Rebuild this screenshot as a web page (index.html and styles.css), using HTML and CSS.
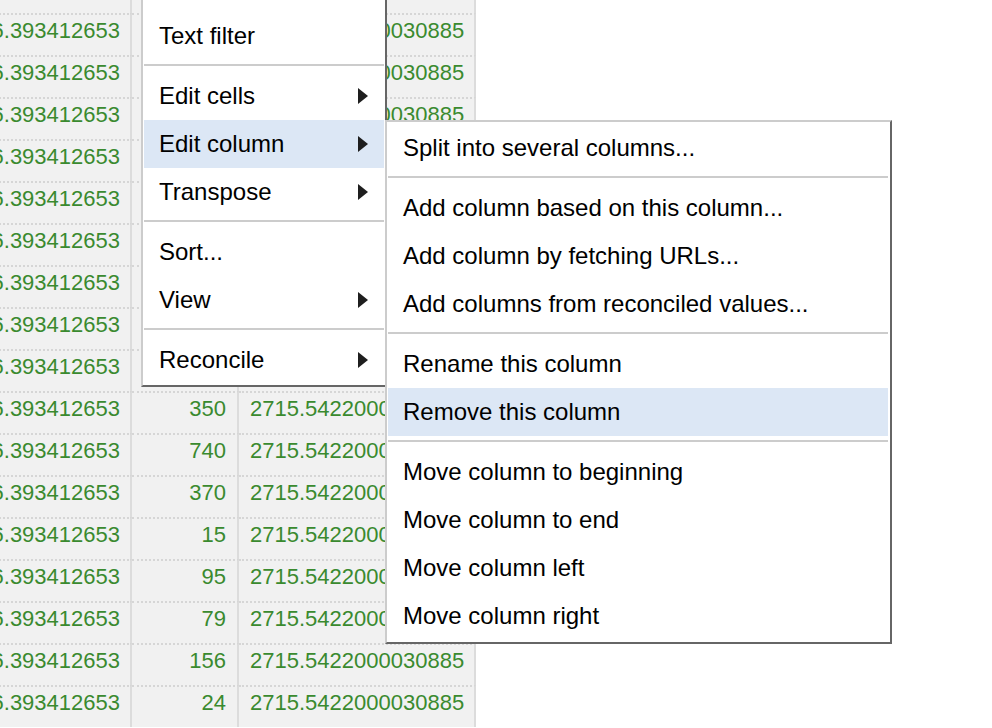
FILE: index.html
```html
<!DOCTYPE html>
<html>
<head>
<meta charset="utf-8">
<link rel="stylesheet" href="styles.css">
</head>
<body>
<div class="grid">
  <div class="row"><div class="c c1">36.393412653</div><div class="c c2">120</div><div class="c c3">2715.5422000030885</div></div>
  <div class="row"><div class="c c1">36.393412653</div><div class="c c2">210</div><div class="c c3">2715.5422000030885</div></div>
  <div class="row"><div class="c c1">36.393412653</div><div class="c c2">45</div><div class="c c3">2715.5422000030885</div></div>
  <div class="row"><div class="c c1">36.393412653</div><div class="c c2">60</div><div class="c c3">2715.5422000030885</div></div>
  <div class="row"><div class="c c1">36.393412653</div><div class="c c2">88</div><div class="c c3">2715.5422000030885</div></div>
  <div class="row"><div class="c c1">36.393412653</div><div class="c c2">430</div><div class="c c3">2715.5422000030885</div></div>
  <div class="row"><div class="c c1">36.393412653</div><div class="c c2">12</div><div class="c c3">2715.5422000030885</div></div>
  <div class="row"><div class="c c1">36.393412653</div><div class="c c2">67</div><div class="c c3">2715.5422000030885</div></div>
  <div class="row"><div class="c c1">36.393412653</div><div class="c c2">230</div><div class="c c3">2715.5422000030885</div></div>
  <div class="row"><div class="c c1">36.393412653</div><div class="c c2">51</div><div class="c c3">2715.5422000030885</div></div>
  <div class="row"><div class="c c1">36.393412653</div><div class="c c2">350</div><div class="c c3">2715.5422000030885</div></div>
  <div class="row"><div class="c c1">36.393412653</div><div class="c c2">740</div><div class="c c3">2715.5422000030885</div></div>
  <div class="row"><div class="c c1">36.393412653</div><div class="c c2">370</div><div class="c c3">2715.5422000030885</div></div>
  <div class="row"><div class="c c1">36.393412653</div><div class="c c2">15</div><div class="c c3">2715.5422000030885</div></div>
  <div class="row"><div class="c c1">36.393412653</div><div class="c c2">95</div><div class="c c3">2715.5422000030885</div></div>
  <div class="row"><div class="c c1">36.393412653</div><div class="c c2">79</div><div class="c c3">2715.5422000030885</div></div>
  <div class="row"><div class="c c1">36.393412653</div><div class="c c2">156</div><div class="c c3">2715.5422000030885</div></div>
  <div class="row"><div class="c c1">36.393412653</div><div class="c c2">24</div><div class="c c3">2715.5422000030885</div></div>
</div>

<div class="menu main-menu">
  <div class="item">Facet<span class="arrow"></span></div>
  <div class="item">Text filter</div>
  <div class="sep"></div>
  <div class="item">Edit cells<span class="arrow"></span></div>
  <div class="item active">Edit column<span class="arrow"></span></div>
  <div class="item">Transpose<span class="arrow"></span></div>
  <div class="sep"></div>
  <div class="item">Sort...</div>
  <div class="item">View<span class="arrow"></span></div>
  <div class="sep"></div>
  <div class="item">Reconcile<span class="arrow"></span></div>
</div>

<div class="menu sub-menu">
  <div class="item">Split into several columns...</div>
  <div class="sep"></div>
  <div class="item">Add column based on this column...</div>
  <div class="item">Add column by fetching URLs...</div>
  <div class="item">Add columns from reconciled values...</div>
  <div class="sep"></div>
  <div class="item">Rename this column</div>
  <div class="item active">Remove this column</div>
  <div class="sep"></div>
  <div class="item">Move column to beginning</div>
  <div class="item">Move column to end</div>
  <div class="item">Move column left</div>
  <div class="item">Move column right</div>
</div>
</body>
</html>
```

FILE: styles.css
```css
html, body {
  margin: 0;
  padding: 0;
  background: #ffffff;
  overflow: hidden;
}

body {
  width: 992px;
  height: 728px;
  position: relative;
  font-family: "Liberation Sans", Arial, sans-serif;
}

.grid {
  margin-left: -40px;
  margin-top: -29px;
  display: flex;
  flex-direction: column;
  width: 516px;
}

.row {
  display: flex;
}

.c {
  box-sizing: border-box;
  height: 42px;
  background: #f1f1f1;
  border-top: 2px dotted #d6d6d6;
  border-right: 2px solid #dcdcdc;
  font-size: 22px;
  line-height: 26px;
  padding-top: 3px;
  color: #3a8a2f;
  white-space: nowrap;
  overflow: hidden;
}

.c1 {
  width: 172px;
  text-align: right;
  padding-right: 10px;
}

.c2 {
  width: 107px;
  text-align: right;
  padding-right: 11px;
}

.c3 {
  width: 237px;
  text-align: left;
  padding-left: 11px;
}

.menu {
  position: absolute;
  box-sizing: border-box;
  background: #ffffff;
  border: 2px solid #cccccc;
  border-right-color: #666666;
  border-bottom-color: #666666;
}

.main-menu {
  left: 141px;
  top: -40px;
  width: 246px;
  padding: 2px 1px 1px 1px;
}

.sub-menu {
  left: 385px;
  top: 120px;
  width: 507px;
  padding: 2px 2px 2px 1px;
}

.item {
  position: relative;
  height: 48px;
  line-height: 48px;
  padding-left: 15px;
  font-size: 24px;
  color: #000000;
  white-space: nowrap;
}

.item.active {
  background: #dce7f5;
}

.arrow {
  position: absolute;
  right: 16px;
  top: 16px;
  width: 0;
  height: 0;
  border-left: 10px solid #1e1e1e;
  border-top: 8px solid transparent;
  border-bottom: 8px solid transparent;
}

.sep {
  height: 2px;
  background: #cccccc;
  margin: 4px 0 6px 0;
}
```
